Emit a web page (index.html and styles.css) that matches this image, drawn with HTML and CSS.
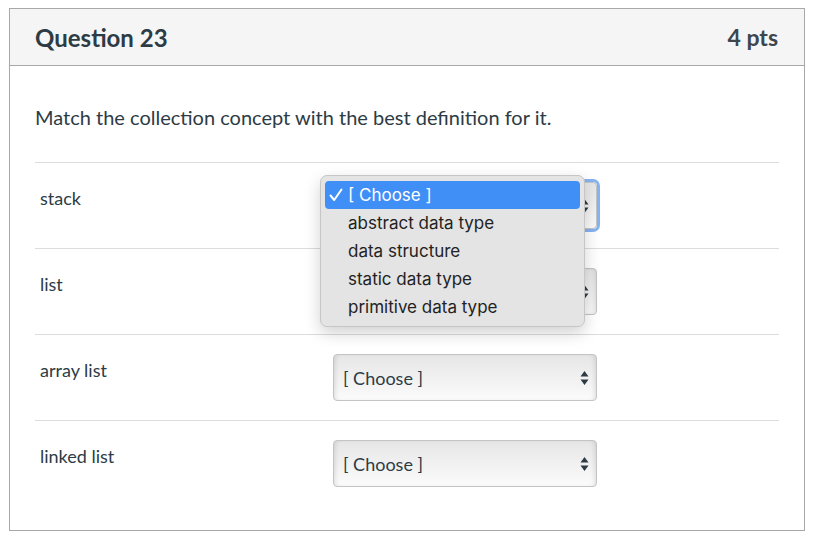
FILE: index.html
```html
<!DOCTYPE html>
<html>
<head>
<meta charset="utf-8">
<link rel="stylesheet" href="styles.css">
</head>
<body>
<div class="page">
  <div class="question">
    <div class="q-header">
      <span class="q-title">Question 23</span>
      <span class="q-pts">4 pts</span>
    </div>
    <div class="q-body">
      <p class="q-text">Match the collection concept with the best definition for it.</p>
      <div class="rows">
        <div class="row row-open">
          <div class="label">stack</div>
          <div class="select focused">
            <span class="sel-text">[ Choose ]</span>
            <svg class="arrows" width="9" height="14" viewBox="0 0 9 14"><path d="M4.5 0 L8.5 5.5 H0.5 Z M4.5 14 L8.5 8.5 H0.5 Z" fill="#2d3b45"/></svg>
          </div>
          <div class="menu">
            <div class="item active"><svg class="check" width="14" height="14" viewBox="0 0 14 14"><path d="M1.5 7.5 L5.2 12 L12.5 1.5" fill="none" stroke="#fff" stroke-width="2" stroke-linecap="round" stroke-linejoin="round"/></svg>[ Choose ]</div>
            <div class="item">abstract data type</div>
            <div class="item">data structure</div>
            <div class="item">static data type</div>
            <div class="item">primitive data type</div>
          </div>
        </div>
        <div class="row">
          <div class="label">list</div>
          <div class="select">
            <span class="sel-text">[ Choose ]</span>
            <svg class="arrows" width="9" height="14" viewBox="0 0 9 14"><path d="M4.5 0 L8.5 5.5 H0.5 Z M4.5 14 L8.5 8.5 H0.5 Z" fill="#2d3b45"/></svg>
          </div>
        </div>
        <div class="row">
          <div class="label">array list</div>
          <div class="select">
            <span class="sel-text">[ Choose ]</span>
            <svg class="arrows" width="9" height="14" viewBox="0 0 9 14"><path d="M4.5 0 L8.5 5.5 H0.5 Z M4.5 14 L8.5 8.5 H0.5 Z" fill="#2d3b45"/></svg>
          </div>
        </div>
        <div class="row">
          <div class="label">linked list</div>
          <div class="select">
            <span class="sel-text">[ Choose ]</span>
            <svg class="arrows" width="9" height="14" viewBox="0 0 9 14"><path d="M4.5 0 L8.5 5.5 H0.5 Z M4.5 14 L8.5 8.5 H0.5 Z" fill="#2d3b45"/></svg>
          </div>
        </div>
      </div>
    </div>
  </div>
</div>
</body>
</html>
```

FILE: styles.css
```css
* { box-sizing: border-box; }
html, body { margin: 0; padding: 0; background: #fff; }
body {
  font-family: Lato, "Open Sans", sans-serif;
  color: #2d3b45;
}
.page {
  padding: 8px 0 0 9px;
}
.question {
  width: 796px;
  border: 1px solid #a8a8a8;
}
.q-header {
  height: 57px;
  background: #f5f5f5;
  border-bottom: 1px solid #a8a8a8;
  display: flex;
  align-items: center;
  justify-content: space-between;
  padding: 0 26px 0 25px;
}
.q-title {
  font-size: 24px;
  font-weight: 700;
}
.q-pts {
  font-size: 23px;
  font-weight: 700;
  color: #3d464d;
}
.q-body {
  padding: 39px 25px 24px 25px;
}
.q-text {
  margin: 0 0 33px 0;
  font-size: 20px;
  line-height: 24px;
}
.row {
  position: relative;
  display: flex;
  align-items: flex-start;
  border-top: 1px solid #dcdcdc;
  padding: 19px 0 19px 5px;
}
.row-open { z-index: 5; }
.label {
  width: 293px;
  margin-top: 6px;
  font-size: 18px;
  line-height: 20px;
}
.select {
  width: 264px;
  height: 47px;
  border: 1px solid #c4c4c4;
  border-radius: 4px;
  background: linear-gradient(#e6e6e6, #fbfbfb);
  box-shadow: inset 4px 0 5px -3px rgba(0,0,0,0.12), inset -4px 0 5px -3px rgba(0,0,0,0.12);
  display: flex;
  align-items: center;
  justify-content: space-between;
  padding: 0 7px 0 9px;
}
.select.focused {
  box-shadow: 0 0 0 3px #86b3f2;
}
.sel-text {
  font-size: 18px;
}
.arrows { display: block; }
.menu {
  position: absolute;
  left: 285px;
  top: 12px;
  width: 265px;
  height: 152px;
  background: #e4e4e4;
  border: 1px solid #c6c6c6;
  border-radius: 7px;
  box-shadow: 0 6px 16px rgba(0,0,0,0.18);
  padding: 5px 4px;
  font-family: Inter, "Liberation Sans", Arial, sans-serif;
  font-size: 17px;
  color: #222;
}
.item {
  height: 28px;
  line-height: 28px;
  padding-left: 23px;
  border-radius: 4px;
  position: relative;
}
.item.active {
  background: #3f8ff7;
  color: #fff;
}
.check {
  position: absolute;
  left: 4px;
  top: 7px;
}
```
